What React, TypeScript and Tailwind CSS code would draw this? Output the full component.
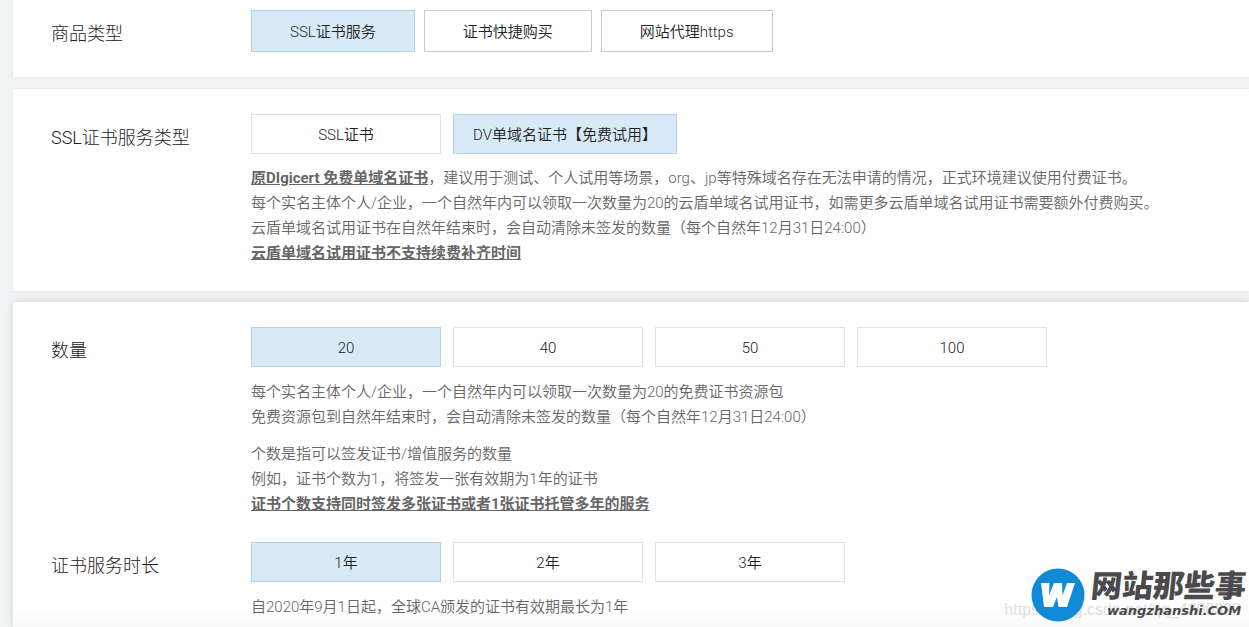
import React from 'react';

interface Option {
  label: string;
  active?: boolean;
}

const productTypes: Option[] = [
  { label: 'SSL证书服务', active: true },
  { label: '证书快捷购买' },
  { label: '网站代理https' },
];

const serviceTypes: Option[] = [
  { label: 'SSL证书' },
  { label: 'DV单域名证书【免费试用】', active: true },
];

const amounts: Option[] = [{ label: '20', active: true }, { label: '40' }, { label: '50' }, { label: '100' }];

const durations: Option[] = [{ label: '1年', active: true }, { label: '2年' }, { label: '3年' }];

const TabButton = ({ label, active }: Option) => (
  <button
    type="button"
    aria-pressed={!!active}
    className={`h-[42px] border px-[38px] pt-0.5 text-[15px] text-[#222] ${active ? 'border-[#b5d3e4] bg-[#d8eaf6]' : 'border-[#ccc] bg-white'}`}
  >
    {label}
  </button>
);

const OptionButton = ({ label, active }: Option) => (
  <button
    type="button"
    aria-pressed={!!active}
    className={`h-10 min-w-[190px] border px-[19px] pt-0.5 text-[15px] text-[#222] ${active ? 'border-[#b5d3e4] bg-[#d8eaf6]' : 'border-[#e2e2e2] bg-white'}`}
  >
    {label}
  </button>
);

const Row = ({ title, children }: { title: string; children: React.ReactNode }) => (
  <div className="flex">
    <h2 className="w-[200px] shrink-0 pt-2.5 text-lg leading-7 font-light text-[#222]">{title}</h2>
    <div className="min-w-0 flex-1">{children}</div>
  </div>
);

const Logo = () => (
  <div className="flex items-center gap-1.5">
    <svg viewBox="0 0 54 54" className="h-[54px] w-[54px] shrink-0" aria-hidden="true">
      <circle cx="27" cy="27" r="26.5" fill="#0e8ad6" />
      <path d="M10 15h8.500l-.5 12.500 5-12.500h8l.5 12.500 4.500-12.500h8L36 39h-8.500l-1.500-10-4 10h-9z" fill="#fff" />
    </svg>
    <div className="text-[#4a4a4c]">
      <div className="-skew-x-6 text-[31px] leading-8 font-black">网站那些事</div>
      <div className="pl-4 font-['DejaVu_Sans',sans-serif] text-[13px] leading-4 font-bold italic">wangzhanshi.COM</div>
    </div>
  </div>
);

const App: React.FC = () => (
  <div className="relative min-h-screen overflow-hidden bg-[#f0f2f4] pl-[13px] font-[Roboto,'Noto_Sans_CJK_SC',sans-serif] font-[350]">
    <section className="bg-white pt-2.5 pb-[25px] pl-[38px] shadow-[0_0_3px_rgba(0,0,0,0.06)]">
      <Row title="商品类型">
        <div className="flex flex-wrap gap-[9px]">
          {productTypes.map((o) => <TabButton key={o.label} {...o} />)}
        </div>
      </Row>
    </section>

    <section className="mt-3 bg-white py-[25px] pl-[38px] shadow-[0_0_3px_rgba(0,0,0,0.06)]">
      <Row title="SSL证书服务类型">
        <div className="flex flex-wrap gap-3">
          {serviceTypes.map((o) => <OptionButton key={o.label} {...o} />)}
        </div>
        <div className="mt-3 text-[15px] leading-[25px] text-[#666]">
          <p><b className="font-bold underline">原DIgicert 免费单域名证书</b>，建议用于测试、个人试用等场景，org、jp等特殊域名存在无法申请的情况，正式环境建议使用付费证书。</p>
          <p>每个实名主体个人/企业，一个自然年内可以领取一次数量为20的云盾单域名试用证书，如需更多云盾单域名试用证书需要额外付费购买。</p>
          <p>云盾单域名试用证书在自然年结束时，会自动清除未签发的数量（每个自然年12月31日24:00）</p>
          <p><b className="font-bold underline">云盾单域名试用证书不支持续费补齐时间</b></p>
        </div>
      </Row>
    </section>

    <section className="mt-[11px] flex flex-col gap-[25px] bg-linear-to-t from-[#f9f9f9] to-white to-[20px] pt-[25px] pb-2 pl-[38px] shadow-[0_0_8px_rgba(0,0,0,0.12)]">
      <Row title="数量">
        <div className="flex flex-wrap gap-3">
          {amounts.map((o) => <OptionButton key={o.label} {...o} />)}
        </div>
        <div className="mt-[13px] text-[15px] leading-[25px] text-[#666]">
          <p>每个实名主体个人/企业，一个自然年内可以领取一次数量为20的免费证书资源包</p>
          <p>免费资源包到自然年结束时，会自动清除未签发的数量（每个自然年12月31日24:00）</p>
          <p className="mt-3">个数是指可以签发证书/增值服务的数量</p>
          <p>例如，证书个数为1，将签发一张有效期为1年的证书</p>
          <p><b className="font-bold underline">证书个数支持同时签发多张证书或者1张证书托管多年的服务</b></p>
        </div>
      </Row>
      <Row title="证书服务时长">
        <div className="flex flex-wrap gap-3">
          {durations.map((o) => <OptionButton key={o.label} {...o} />)}
        </div>
        <p className="mt-[13px] text-[15px] leading-[25px] text-[#666]">自2020年9月1日起，全球CA颁发的证书有效期最长为1年</p>
      </Row>
    </section>

    <div className="absolute right-2 bottom-2 font-['Liberation_Sans',sans-serif] text-base leading-5 text-[#dedede]">https://blog.csdn.net/qq_4300320</div>
    <div className="absolute right-[3px] bottom-1.5">
      <Logo />
    </div>
  </div>
);

export default App;
